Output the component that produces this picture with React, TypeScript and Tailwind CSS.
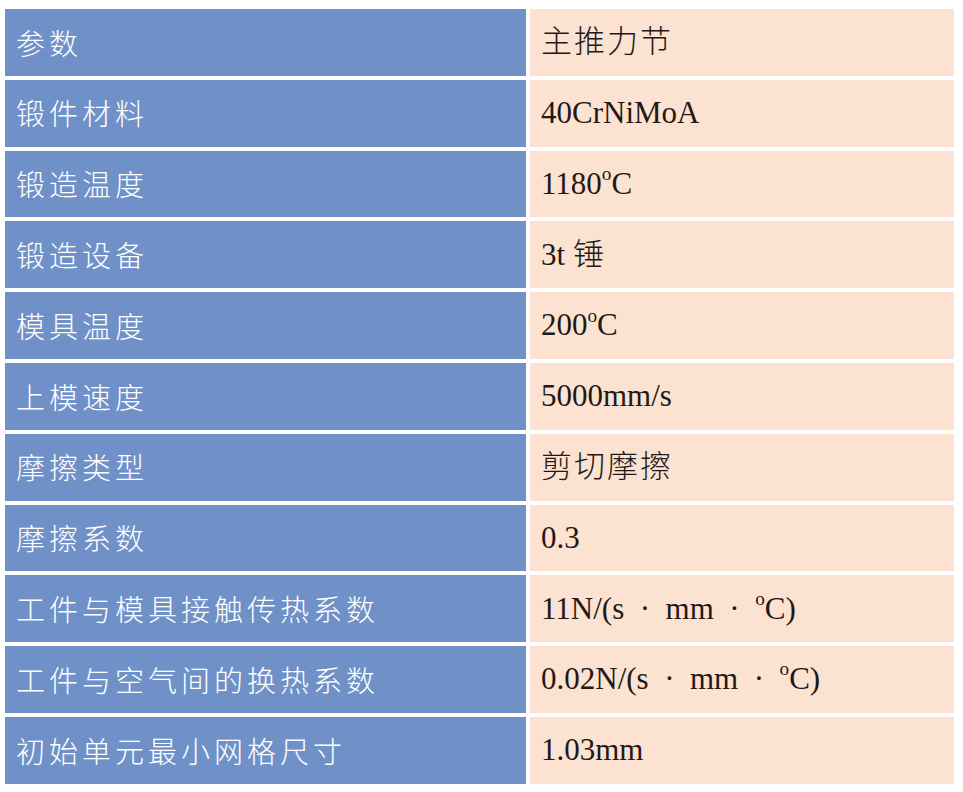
const Deg = () => <sup className="text-[0.62em] relative -top-[0.72em]">o</sup>;

const dot = "\u2002·\u2002";

const rows: { name: string; value: React.ReactNode }[] = [
  { name: "参数", value: <span className="tracking-[2px] font-light">主推力节</span> },
  { name: "锻件材料", value: "40CrNiMoA" },
  { name: "锻造温度", value: <>1180<Deg />C</> },
  { name: "锻造设备", value: <>3t <span className="font-light">锤</span></> },
  { name: "模具温度", value: <>200<Deg />C</> },
  { name: "上模速度", value: "5000mm/s" },
  { name: "摩擦类型", value: <span className="tracking-[2px] font-light">剪切摩擦</span> },
  { name: "摩擦系数", value: "0.3" },
  { name: "工件与模具接触传热系数", value: <>11N/(s{dot}mm{dot}<Deg />C)</> },
  { name: "工件与空气间的换热系数", value: <>0.02N/(s{dot}mm{dot}<Deg />C)</> },
  { name: "初始单元最小网格尺寸", value: "1.03mm" },
];

export default function App() {
  return (
    <div className="w-[963px] h-[792px] bg-white pt-[9px] pl-[5px]">
      <div className="flex flex-col gap-[4px] w-[949px]">
        {rows.map((r, i) => (
          <div key={i} className="flex gap-[4px] h-[66.8px]">
            <div className="w-[521px] bg-[#6f91c8] flex items-center pl-[11px] text-white text-[29px] tracking-[4px] font-light font-['Noto_Sans_CJK_SC',sans-serif]">
              {r.name}
            </div>
            <div className="flex-1 bg-[#fce2d0] flex items-center pl-[11px] text-[#231815] text-[31px] font-['Liberation_Serif','Noto_Sans_CJK_SC',serif]">
              <span>{r.value}</span>
            </div>
          </div>
        ))}
      </div>
    </div>
  );
}
